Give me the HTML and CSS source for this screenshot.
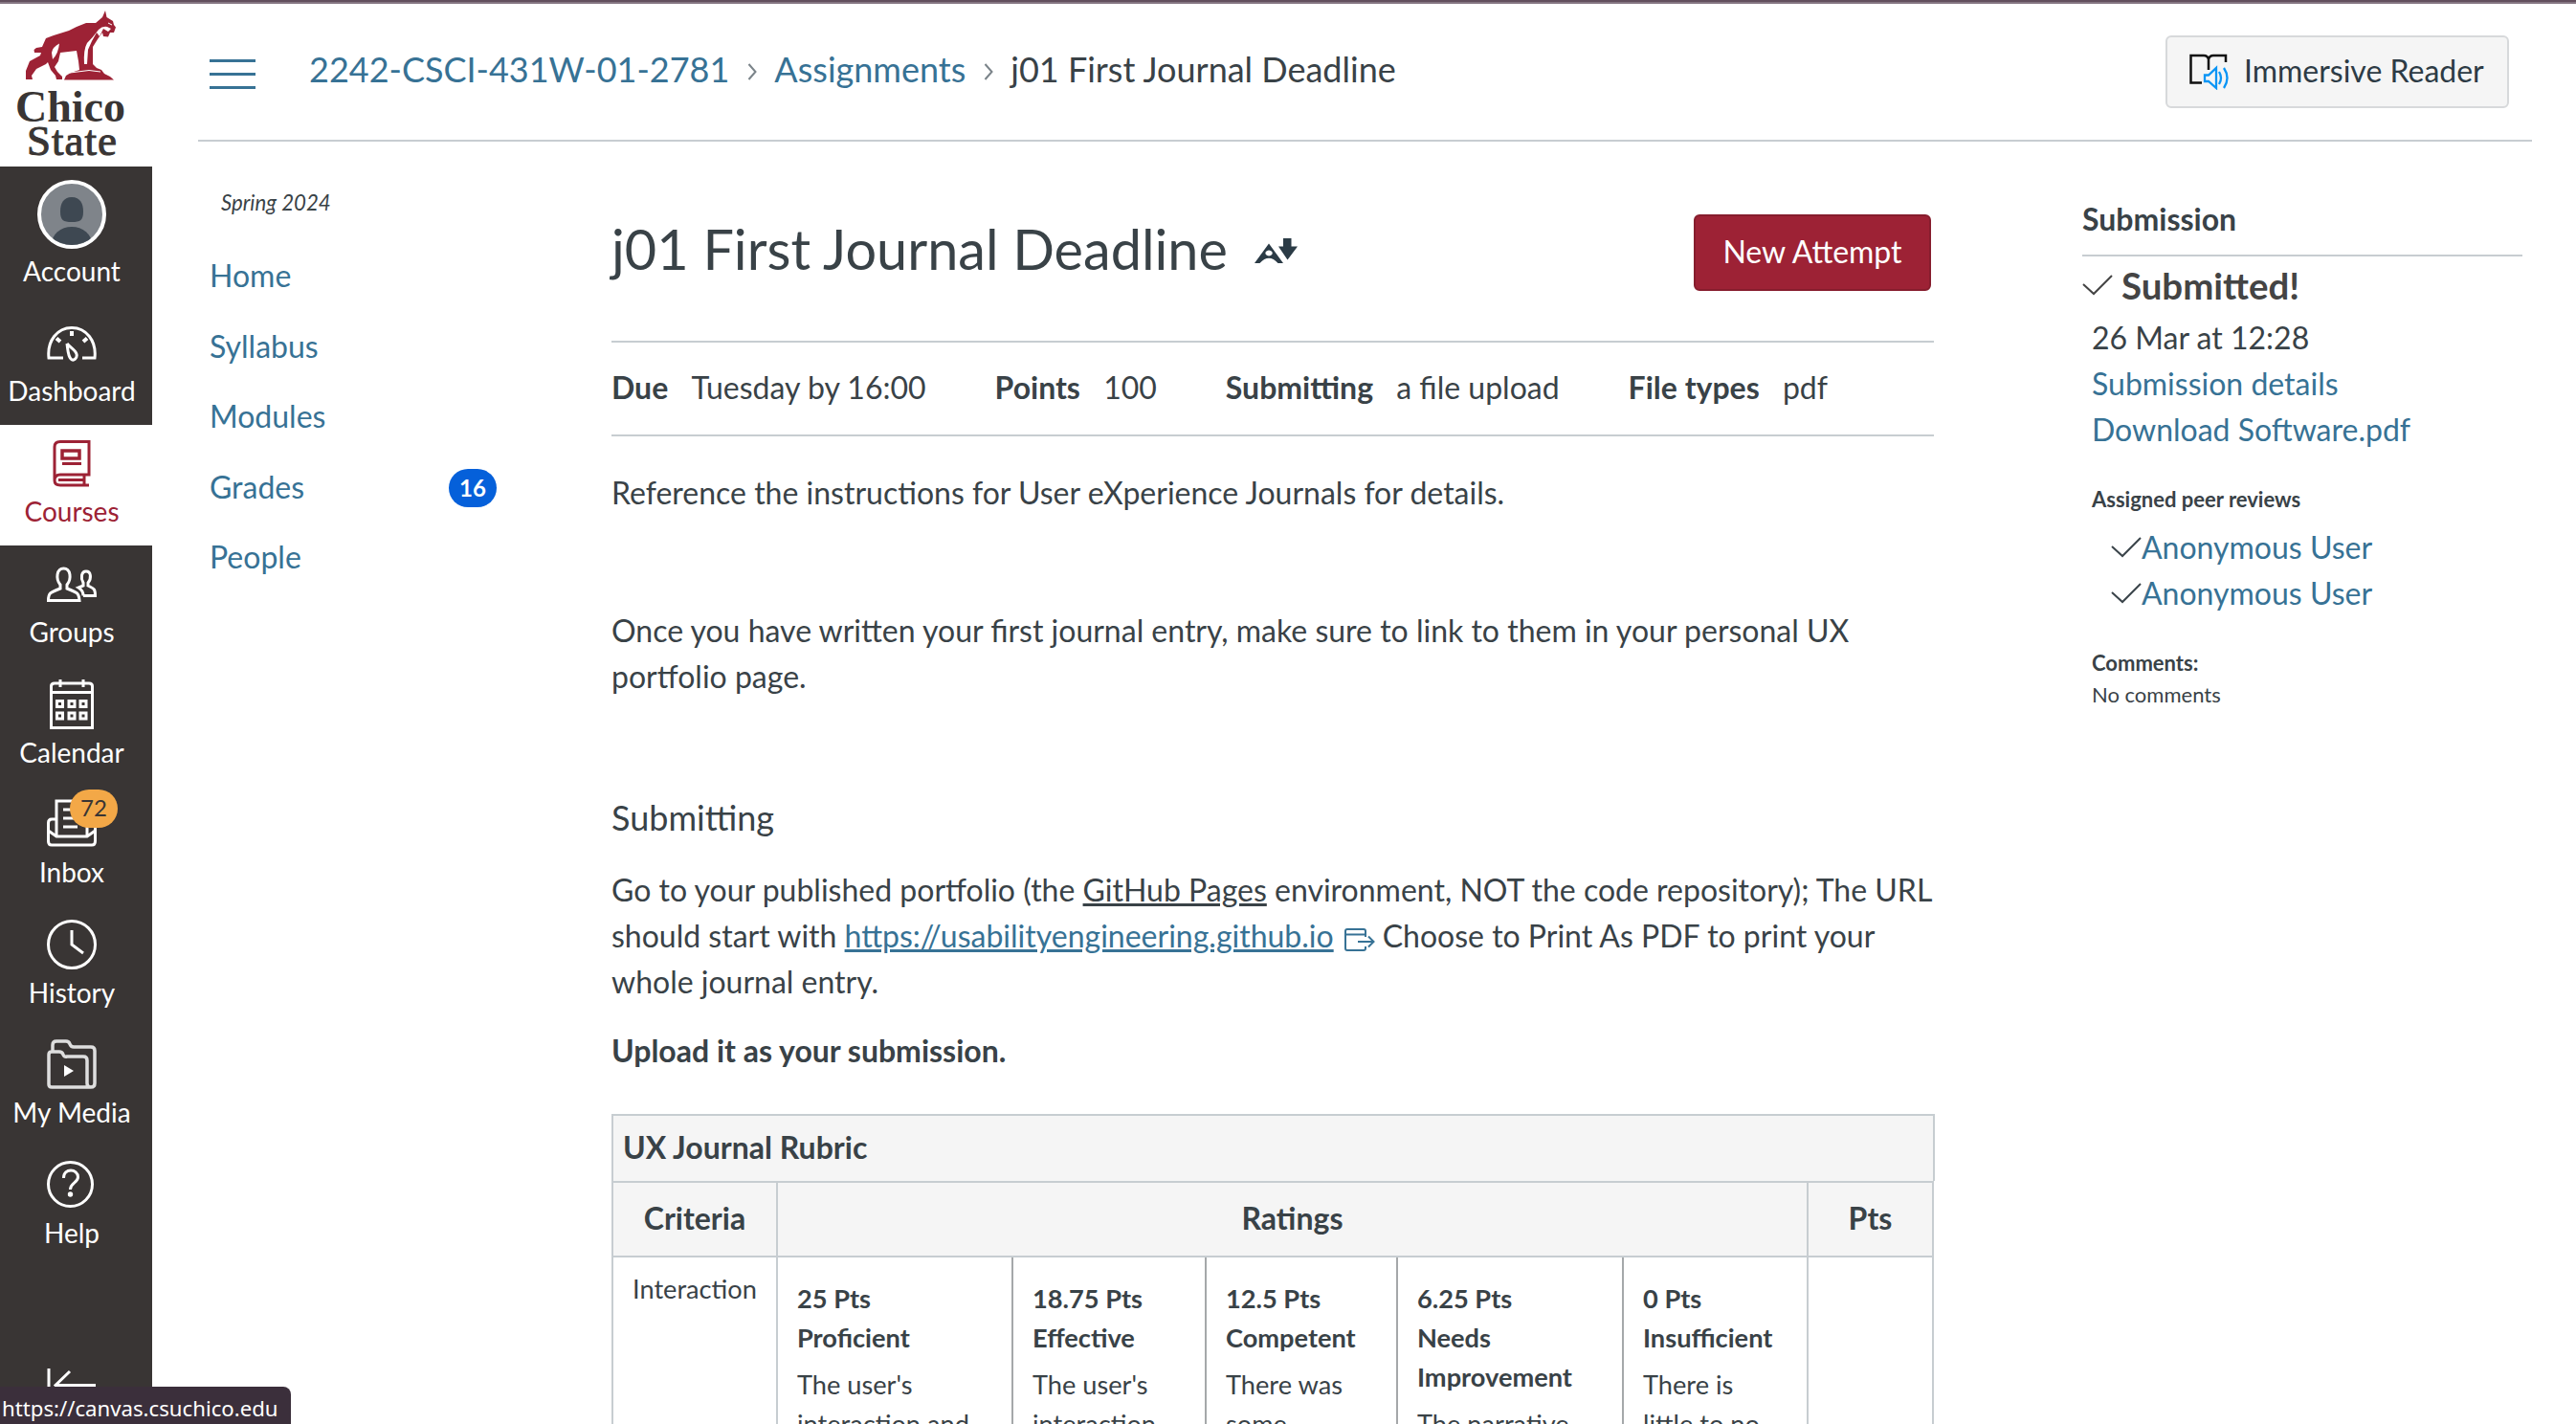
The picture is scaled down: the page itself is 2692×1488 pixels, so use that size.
FILE: index.html
```html
<!DOCTYPE html>
<html lang="en">
<head>
<meta charset="utf-8">
<title>j01 First Journal Deadline</title>
<link rel="stylesheet" href="styles.css">
</head>
<body>
<div class="app">
  <nav class="global-nav">
    <div class="logo">
      <svg class="logo-cat" viewBox="26 10 96 74" width="96" height="74"><path fill="#9d2235" d="M110 11L111.500 18L118 22L119 26L121 28.500L119 34L115 34L113 38.500L108 38L107 34L102 41L97 49L97 67L101 71L106 73L109 77L115 80L119 83.500H67L69 79L74 76L83 73L82 64L80 53L63 55L61 64L57 70L60 75L65 80V83H59L58 79L53 73L50 65L48 67L38 72L33 79L34 83H27L27 74L31 64L42 58L43 55L36 55L35.500 52L38 50L44 49L48 40L56 37L72 32L80 28L90 24L100 24L107 18Z"/><path fill="#fff" d="M62 45.500Q55 49 54 55L55 62Q61 56 62 45.500ZM103 31Q107 27 112 28L116 30L113 33L108 30L104 38L101 34Q96 42 92 52L91 67L88 67Q87 52 91 45Q97 39 103 31Z"/><path fill="none" stroke="#fff" stroke-width="1" d="M73 76L93 73.500L105 75M113 24L117 26"/></svg>
      <span class="logo-chico">Chico</span>
      <span class="logo-state">State</span>
    </div>
    <a class="nav-item account"><svg class="avatar" width="72" height="72" viewBox="0 0 72 72"><defs><clipPath id="face"><circle cx="36" cy="36" r="32"/></clipPath></defs><circle cx="36" cy="36" r="34" fill="#7f848a" stroke="#fff" stroke-width="4"/><g fill="#3e4852" clip-path="url(#face)"><path d="M36 18c9 0 12 7 12 15c0 9-3 11-12 11s-12-2-12-11c0-8 3-15 12-15z"/><ellipse cx="36" cy="67" rx="21" ry="18"/></g></svg><span>Account</span></a>
    <a class="nav-item dash"><svg width="52" height="52" viewBox="0 0 52 52" fill="none" stroke="#fff" stroke-width="3"><path d="M17 41H2C0 23 11 9.500 26 9.500S52 23 50 41H37M21 26C22 33 22 39 25 42C28 45 32 41 31 37C30 33 24 30 21 26"/><path stroke-width="4" d="M26 13V18M10 20.500L14 24M42 20.500L38 24"/></svg><span>Dashboard</span></a>
    <a class="nav-item active"><svg width="52" height="52" viewBox="0 0 52 52" fill="none" stroke="#9d2235" stroke-width="3"><path d="M8 42V8Q8 2.500 14 2.500H44V37H14Q8 37 8 43Q8 48 14 48H44M39 37V48M12 42.500H39M16 25.500H36"/><path d="M16 12H34V20H16Z" stroke-width="3.500"/></svg><span>Courses</span></a>
    <a class="nav-item"><svg width="52" height="52" viewBox="0 0 52 52" fill="none" stroke="#fff" stroke-width="3"><path d="M1.500 43.500C1.500 36 3 35 14 31V27C9 21 10 10 17.500 10S26 21 21 27V31C32 35 33.500 36 34 43.500Z"/><path d="M38 38.500H50.500C50.500 31 49 31 43 28V25C47 20 46 13 41 13S35 20 38 25V28L33 30Q38 33 38 38.500"/></svg><span>Groups</span></a>
    <a class="nav-item"><svg width="52" height="52" viewBox="0 0 52 52" fill="none" stroke="#fff" stroke-width="3"><path d="M4.500 50.500V7Q4.500 4 8 4H44Q47.500 4 47.500 7V50.500ZM4.500 13.500H47.500M14 0V8M38 0V8"/><path d="M10.500 22.500h6v6h-6zM23 22.500h6v6h-6zM35 22.500h6v6h-6zM10.500 35h6v6h-6zM23 35h6v6h-6zM35 35h6v6h-6z"/></svg><span>Calendar</span></a>
    <a class="nav-item inbox"><svg width="52" height="52" viewBox="0 0 52 52" fill="none" stroke="#fff" stroke-width="3"><path d="M10 21H5Q1.500 21 1.500 25V44Q1.500 48 5 48H47Q50.500 48 50.500 44V25Q50.500 21 47 21H42M1.500 33L10 39H42L50.500 33M10 39V2H42V39M17 11H35M17 20H35M17 29H32"/></svg><b class="inbox-count">72</b><span>Inbox</span></a>
    <a class="nav-item"><svg width="52" height="52" viewBox="0 0 52 52" fill="none" stroke="#fff" stroke-width="3"><circle cx="26" cy="26" r="24.500"/><path d="M26 11V26L38 35"/></svg><span>History</span></a>
    <a class="nav-item"><svg width="52" height="52" viewBox="0 0 52 52" fill="none" stroke="#dedede" stroke-width="3.500"><path d="M6 12V6Q6 2 10 2H20Q23 2 24 5T28 8H46Q50 8 50 12V46Q50 50 46 50H5Q2 50 2 47V16Q2 13 5 13H13Q16 13 17 16T21 18H38Q42 18 42 22V46Q42 50 46 50"/><path d="M18 27L28 33L18 39Z" fill="#fff" stroke="none"/></svg><span>My Media</span></a>
    <a class="nav-item"><svg width="52" height="52" viewBox="0 0 52 52" fill="none" stroke="#fff" stroke-width="3"><circle cx="24.500" cy="25.500" r="23"/><path d="M17.500 19C17.500 8 32.500 9 32.500 18C32.500 24 24.500 24 24.500 31"/><circle cx="24.500" cy="36" r="2.700" fill="#fff" stroke="none"/></svg><span>Help</span></a>
    <div class="collapse"><svg width="52" height="36" viewBox="0 0 52 36" fill="none" stroke="#fff" stroke-width="3"><path d="M2 0V36M51 17.500H9M24 3L9 17.500L24 32"/></svg></div>
  </nav>
  <div class="page">
    <header class="topbar">
      <svg class="burger" width="48" height="34" viewBox="0 0 48 34"><path d="M0 2.500H48M0 16.500H48M0 30.500H48" stroke="#377295" stroke-width="3"/></svg>
      <div class="crumbs"><a>2242-CSCI-431W-01-2781</a><svg width="10" height="18" viewBox="0 0 10 18"><path d="M1.500 1L8.500 9L1.500 17" fill="none" stroke="#7b848a" stroke-width="2"/></svg><a>Assignments</a><svg width="10" height="18" viewBox="0 0 10 18"><path d="M1.500 1L8.500 9L1.500 17" fill="none" stroke="#7b848a" stroke-width="2"/></svg><span>j01 First Journal Deadline</span></div>
      <button class="reader"><svg width="42" height="40" viewBox="0 0 42 40" fill="none"><path d="M14 32.500H2.500V4H16Q20 4 21 8Q22 4 26 4H39V11M21 7V19" stroke="#111" stroke-width="2.500"/><path d="M17 24.500H21L29 17V38L21 31H17ZM32 21Q36 27.500 32 34M37 17Q44 27.500 37 38" stroke="#0a95f5" stroke-width="2.300"/></svg>Immersive Reader</button>
    </header>
    <div class="columns">
      <aside class="course-nav">
        <i class="term">Spring 2024</i>
        <a>Home</a><a>Syllabus</a><a>Modules</a><a>Grades<b>16</b></a><a>People</a>
      </aside>
      <main class="content">
        <div class="title-row">
          <h1>j01 First Journal Deadline</h1>
          <svg class="ally" width="45" height="26" viewBox="0 0 45 26"><path fill="#2b3b46" fill-rule="evenodd" d="M0 26L15 5.500L30 26H24.500Q15 15.500 5.500 26ZM15 12.500a3.600 3 0 1 0 .1 0zM30 0H38.500V8.500H45L34.500 22.500L25 8.500H30Z"/></svg>
          <button class="attempt">New Attempt</button>
        </div>
        <div class="facts"><span><b>Due</b>Tuesday by 16:00</span><span><b>Points</b>100</span><span><b>Submitting</b>a file upload</span><span><b>File types</b>pdf</span></div>
        <div class="prose">
          <p>Reference the instructions for User eXperience Journals for details.</p>
          <p>&nbsp;</p>
          <p>Once you have written your first journal entry, make sure to link to them in your personal UX portfolio page.</p>
          <p>&nbsp;</p>
          <h3>Submitting</h3>
          <p>Go to your published portfolio (the <u>GitHub Pages</u> environment, NOT the code repository); The URL<br>should start with <a class="ext">https://usabilityengineering.github.io</a><svg class="out" width="32" height="25" viewBox="0 0 32 25" fill="none" stroke="#377295" stroke-width="2"><path d="M22 9V3Q22 1 20 1H3Q1 1 1 3V21Q1 23 3 23H20Q22 23 22 21V19M1 6.500H22M14 14H30M25 8.500L30.500 14L25 19.500"/></svg>Choose to Print As PDF to print your<br>whole journal entry.</p>
          <p><b>Upload it as your submission.</b></p>
        </div>
        <section class="rubric">
          <div class="rubric-title">UX Journal Rubric</div>
          <div class="rubric-grid">
            <div class="rh">Criteria</div><div class="rh">Ratings</div><div class="rh">Pts</div>
            <div class="criterion">Interaction</div>
            <div class="ratings">
              <div><b>25 Pts</b><b>Proficient</b><p>The user's<br>interaction and</p></div>
              <div><b>18.75 Pts</b><b>Effective</b><p>The user's<br>interaction</p></div>
              <div><b>12.5 Pts</b><b>Competent</b><p>There was<br>some</p></div>
              <div><b>6.25 Pts</b><b>Needs<br>Improvement</b><p>The narrative</p></div>
              <div><b>0 Pts</b><b>Insufficient</b><p>There is<br>little to no</p></div>
            </div>
            <div class="points"></div>
          </div>
        </section>
      </main>
      <aside class="side">
        <h2>Submission</h2>
        <div class="submitted"><svg width="32" height="22" viewBox="0 0 32 22"><path d="M1 10L12 20L31 1" fill="none" stroke="#444" stroke-width="2"/></svg>Submitted!</div>
        <div class="details"><span>26 Mar at 12:28</span><a>Submission details</a><a>Download Software.pdf</a>
          <h4>Assigned peer reviews</h4>
          <div class="peer"><svg width="32" height="22" viewBox="0 0 32 22"><path d="M1 10L12 20L31 1" fill="none" stroke="#3a444a" stroke-width="2"/></svg><a>Anonymous User</a></div>
          <div class="peer"><svg width="32" height="22" viewBox="0 0 32 22"><path d="M1 10L12 20L31 1" fill="none" stroke="#3a444a" stroke-width="2"/></svg><a>Anonymous User</a></div>
          <h4 class="comments">Comments:</h4><small>No comments</small>
        </div>
      </aside>
    </div>
  </div>
  <div class="status">https://canvas.csuchico.edu</div>
</div>
</body>
</html>
```

FILE: styles.css
```css
* { box-sizing: border-box; }
body { margin: 0; font: 32px/48px Lato, "Liberation Sans", sans-serif; color: #394247; background: #fff; }
svg { display: block; flex: none; }
a { color: #377295; }
h1, h2, h3, h4, p { margin: 0; }
.app { position: relative; height: 1488px; overflow: hidden; display: flex; border-top: 2px solid #624f5d; padding-top: 2px; background: #857682; }
.global-nav { width: 159px; flex: none; background: #393534; display: flex; flex-direction: column; }
.logo { height: 170px; flex: none; background: #fff; display: flex; flex-direction: column; align-items: center; padding: 6px 12px 0 0; color: #393534; font-family: "Liberation Serif", serif; }
.logo-chico { font-weight: 700; font-size: 46px; line-height: 36px; margin-top: 10px; letter-spacing: 0; }
.logo-state { font-weight: 400; font-size: 45px; line-height: 34px; letter-spacing: 1px; padding-left: 4px; -webkit-text-stroke: 1px #393534; }
.nav-item { position: relative; height: 125.500px; flex: none; display: flex; flex-direction: column; align-items: center; color: #fff; font-size: 28px; line-height: 34px; padding: 14px 9px 0 0; gap: 7px; }
.nav-item.account { height: 142px; gap: 6px; }
.nav-item.dash { height: 128px; padding-top: 17px; gap: 6px; }
.nav-item.active { background: #fff; color: #9d2235; height: 126px; padding-top: 15px; gap: 6px; }
.inbox-count { position: absolute; left: 73px; top: 4px; width: 50px; height: 40px; border-radius: 20px; background: #f3a847; color: #393534; font-size: 24px; font-weight: 400; line-height: 38px; text-align: center; }
.collapse { margin-top: auto; padding-left: 49px; height: 58px; }
.page { flex: 1; display: flex; flex-direction: column; background: #fff; }
.topbar { height: 144px; flex: none; margin: 0 46px 0 48px; border-bottom: 2px solid #c7cdd1; display: flex; align-items: flex-start; padding: 33px 24px 0 12px; }
.burger { margin: 24px 56px 0 0; }
.crumbs { display: flex; align-items: center; gap: 18.500px; font-size: 36px; line-height: 70px; flex: 1; }
.crumbs svg { margin-top: 5px; }
button { font: inherit; }
.reader { height: 76px; width: 359px; padding: 0 0 3px 22px; border: 2px solid #d7d9db; border-radius: 6px; background: #f5f5f5; color: #2d3b45; display: flex; align-items: center; gap: 16px; }
.columns { display: flex; flex: 1; min-height: 0; }
.course-nav { width: 480px; flex: none; padding: 46px 120px 0 60px; display: flex; flex-direction: column; }
.term { font-size: 22.200px; line-height: 36px; padding-left: 12px; margin-bottom: 21px; }
.course-nav a { height: 73.500px; line-height: 73.500px; display: flex; align-items: center; justify-content: space-between; }
.course-nav b { width: 50px; height: 40px; margin-top: 3px; border-radius: 20px; background: #0560da; color: #fff; font-size: 24px; line-height: 39px; text-align: center; }
.content { width: 1382px; flex: none; }
.title-row { display: flex; height: 208px; padding: 76px 3px 0 0; align-items: flex-start; }
h1 { font-weight: 400; font-size: 57.600px; line-height: 72px; }
.ally { margin: 25px 0 0 28px; }
.attempt { margin-left: auto; width: 248px; height: 80px; border: 2px solid #861d2d; border-radius: 6px; background: #9d2235; color: #fff; padding: 0 0 2px; }
.facts { display: flex; gap: 72px; height: 100px; border: solid #c7cdd1; border-width: 2px 0; line-height: 94px; }
.facts b { margin-right: 24.200px; }
.prose { padding-top: 35px; }
.prose p { margin-bottom: 24px; }
.prose h3 { font-weight: 400; font-size: 36px; line-height: 54px; margin-bottom: 25px; }
.prose u, .ext { text-decoration: underline; }
.out { display: inline-block; margin: 0 8px 0 11px; vertical-align: -5px; }
.rubric-title { width: 1383px; height: 70px; border: 2px solid #c7cdd1; border-bottom: 0; background: #f5f5f5; font-weight: 700; line-height: 66px; padding-left: 10px; }
.rubric { margin-top: 42px; }
.rubric-grid { display: grid; grid-template-columns: 172px 1077px 131px; grid-template-rows: 78px 400px; border-top: 2px solid #c7cdd1; border-left: 2px solid #c7cdd1; width: 1382px; }
.rh { background: #f5f5f5; border: solid #c7cdd1; border-width: 0 2px 2px 0; font-weight: 700; text-align: center; line-height: 74px; }
.criterion, .points { border-right: 2px solid #c7cdd1; }
.criterion { font-size: 27.200px; line-height: 42px; padding: 12px 0 0 20px; }
.ratings { display: grid; grid-template-columns: 246px 202px 200px 236px 191px; border-right: 2px solid #c7cdd1; font-size: 27.200px; line-height: 41px; }
.ratings > div { padding: 22px 0 0 20px; border-right: 2px solid #a5a8aa; }
.ratings > div:last-child { border-right: 0; }
.ratings b { display: block; }
.ratings p { margin-top: 8px; }
.side { width: 460px; margin-left: 155px; padding-top: 57px; }
h2 { font-size: 32px; line-height: 48px; height: 63px; border-bottom: 2px solid #c7cdd1; }
.submitted { display: flex; align-items: center; gap: 9px; font-size: 38.400px; font-weight: 700; line-height: 58px; height: 58px; color: #444; margin: 1px 0 2px; }
.details { padding-left: 10px; display: flex; flex-direction: column; }
h4 { font-size: 22px; line-height: 34px; margin: 32px 0 9px; }
.peer { display: flex; align-items: center; padding-left: 20px; }
h4.comments { margin: 32px 0 0; }
small { font-size: 22px; line-height: 32px; }
.status { position: absolute; left: 0; bottom: 0; width: 304px; height: 39px; border-radius: 0 8px 0 0; background: #3b2f3b; color: #fff; font: 22.200px/45px "Noto Sans", sans-serif; padding-left: 2px; white-space: nowrap; }
```
